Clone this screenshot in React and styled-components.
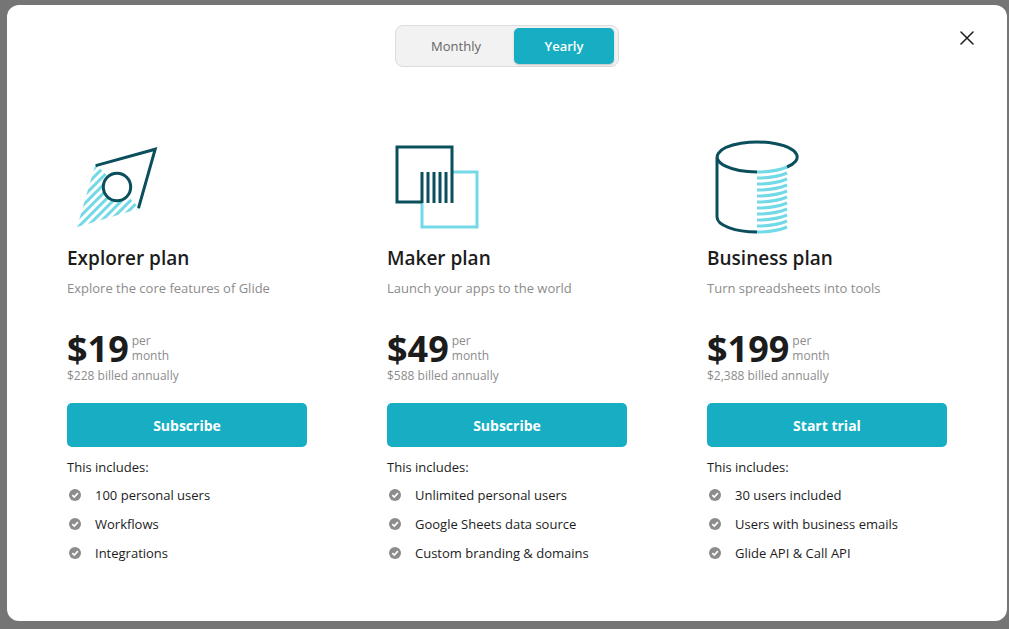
import React, { useState } from "react";
import styled, { createGlobalStyle } from "styled-components";

const GlobalStyle = createGlobalStyle`
  *, *::before, *::after { box-sizing: border-box; }
  body {
    margin: 0;
    background: #757575;
    color: #1c1c1c;
    font-family: "Segoe UI", "Open Sans", "Noto Sans", sans-serif;
    font-size: 13px;
    line-height: 20px;
  }
  button { font-family: inherit; cursor: pointer; }
`;

const Overlay = styled.div`
  display: flex;
  min-height: 100vh;
  padding: 5px 2px 8px 7px;
`;

const Dialog = styled.main`
  flex: 1;
  padding: 20px 60px 40px;
  border-radius: 12px;
  background: #fff;
`;

const Header = styled.header`
  display: grid;
  grid-template-columns: 1fr 224px 1fr;
  align-items: start;
  margin-bottom: 70px;
`;

const PeriodSwitch = styled.div`
  display: flex;
  grid-column: 2;
  height: 42px;
  padding: 2px 4px 2px 2px;
  border: 1px solid #dcdcdc;
  border-radius: 8px;
  background: #f2f2f2;
`;

const PeriodButton = styled.button`
  flex: ${({ $active }) => ($active ? "0 0 100px" : "1")};
  padding: 0;
  border: 0;
  border-radius: 5px;
  background: ${({ $active }) => ($active ? "#17aec3" : "transparent")};
  box-shadow: ${({ $active }) => ($active ? "0 1px 2px rgba(0, 0, 0, 0.2)" : "none")};
  color: ${({ $active }) => ($active ? "#fff" : "#666")};
  font-size: 13px;
  font-weight: ${({ $active }) => ($active ? 600 : 400)};
`;

const CloseButton = styled.button`
  display: flex;
  justify-self: end;
  margin: 0 -33px;
  padding: 6px;
  border: 0;
  background: none;
  color: #1c1c1c;
`;

const Plans = styled.div`
  display: grid;
  grid-template-columns: repeat(3, 1fr);
  gap: 80px;
`;

const Plan = styled.section`
  display: flex;
  flex-direction: column;
`;

const Artwork = styled.svg`
  width: 100px;
  height: 100px;
  fill: none;
  stroke-width: 3;
`;

const PlanName = styled.h2`
  margin: 7px 0 6px;
  font-size: 19px;
  font-weight: 600;
  line-height: 28px;
`;

const Tagline = styled.p`
  margin: 0 0 32px;
  color: #8c8c8c;
`;

const PriceRow = styled.div`
  display: flex;
  align-items: flex-start;
  gap: 3px;
`;

const Amount = styled.strong`
  font-size: 36px;
  font-weight: 700;
  line-height: 38px;
`;

const Per = styled.span`
  width: min-content;
  margin-top: 3px;
  color: #8c8c8c;
  font-size: 12px;
  line-height: 15px;
`;

const Billed = styled.p`
  margin: 0 0 19px;
  color: #8c8c8c;
  font-size: 12px;
  line-height: 16px;
`;

const ActionButton = styled.button`
  height: 44px;
  border: 0;
  border-radius: 5px;
  background: #17aec3;
  color: #fff;
  font-size: 14px;
  font-weight: 700;
`;

const Includes = styled.p`
  margin: 10px 0 3px;
`;

const Features = styled.ul`
  margin: 0;
  padding: 0;
  list-style: none;
`;

const Feature = styled.li`
  display: flex;
  align-items: center;
  gap: 14px;
  height: 29px;
  padding-left: 2px;
`;

const DARK = "#0b4f5c";
const LIGHT = "#74d9e6";

function ExplorerArt() {
  const stripes = Array.from({ length: 11 }, (_, i) => 58.4 + i * 8.58);
  return (
    <Artwork viewBox="0 0 100 100" aria-hidden="true">
      <clipPath id="kite-tail">
        <path d="M28.500 27 73 71.500 10 90Z" />
      </clipPath>
      <g clipPath="url(#kite-tail)" stroke={LIGHT}>
        {stripes.map((s) => (
          <path key={s} d={`M0 ${s}L${s} 0`} />
        ))}
      </g>
      <circle cx="50" cy="50" r="13.7" fill="#fff" stroke={DARK} />
      <path d="M28.700 28.600 88.200 12.200 71.500 71.200" stroke={DARK} />
    </Artwork>
  );
}

function MakerArt() {
  return (
    <Artwork viewBox="0 0 100 100" aria-hidden="true">
      <path d="M65 35H90V90H35V66" stroke={LIGHT} />
      <path d="M35 65H10V10H65V66" stroke={DARK} />
      <path d="M35 35V66M41 35V66M47 35V66M53 35V66M59 35V66" stroke={DARK} />
    </Artwork>
  );
}

function BusinessArt() {
  const layers = Array.from({ length: 11 }, (_, i) => 35 + i * 6);
  return (
    <Artwork viewBox="0 0 100 100" aria-hidden="true">
      <g stroke={LIGHT}>
        {layers.map((y) => (
          <path key={y} d={`M50 ${y}A40 15 0 0 0 80 ${y - 5}`} />
        ))}
      </g>
      <path d="M50 35A40 15 0 1 1 80 30M10 20V80C10 88.300 28 95 50 95" stroke={DARK} />
    </Artwork>
  );
}

function CheckBadge() {
  return (
    <svg width="12" height="12" viewBox="0 0 12 12" fill="none" aria-hidden="true">
      <circle cx="6" cy="6" r="6" fill="#8c8c8c" />
      <path d="M3.300 6.200 5.300 8.100 8.900 4.200" stroke="#fff" strokeWidth="1.700" />
    </svg>
  );
}

const PLANS = [
  {
    name: "Explorer plan",
    tagline: "Explore the core features of Glide",
    price: "$19",
    billed: "$228 billed annually",
    action: "Subscribe",
    features: ["100 personal users", "Workflows", "Integrations"],
    Art: ExplorerArt,
  },
  {
    name: "Maker plan",
    tagline: "Launch your apps to the world",
    price: "$49",
    billed: "$588 billed annually",
    action: "Subscribe",
    features: ["Unlimited personal users", "Google Sheets data source", "Custom branding & domains"],
    Art: MakerArt,
  },
  {
    name: "Business plan",
    tagline: "Turn spreadsheets into tools",
    price: "$199",
    billed: "$2,388 billed annually",
    action: "Start trial",
    features: ["30 users included", "Users with business emails", "Glide API & Call API"],
    Art: BusinessArt,
  },
];

export default function App() {
  const [period, setPeriod] = useState("Yearly");
  return (
    <>
      <GlobalStyle />
      <Overlay>
        <Dialog>
          <Header>
            <PeriodSwitch role="group" aria-label="Billing period">
              {["Monthly", "Yearly"].map((p) => (
                <PeriodButton
                  key={p}
                  type="button"
                  $active={p === period}
                  aria-pressed={p === period}
                  onClick={() => setPeriod(p)}
                >
                  {p}
                </PeriodButton>
              ))}
            </PeriodSwitch>
            <CloseButton type="button" aria-label="Close">
              <svg width="14" height="14" viewBox="0 0 14 14" fill="none" aria-hidden="true">
                <path d="M1 1 13 13M13 1 1 13" stroke="currentColor" strokeWidth="1.500" strokeLinecap="round" />
              </svg>
            </CloseButton>
          </Header>
          <Plans>
            {PLANS.map(({ name, tagline, price, billed, action, features, Art }) => (
              <Plan key={name}>
                <Art />
                <PlanName>{name}</PlanName>
                <Tagline>{tagline}</Tagline>
                <PriceRow>
                  <Amount>{price}</Amount>
                  <Per>per month</Per>
                </PriceRow>
                <Billed>{billed}</Billed>
                <ActionButton type="button">{action}</ActionButton>
                <Includes>This includes:</Includes>
                <Features>
                  {features.map((f) => (
                    <Feature key={f}>
                      <CheckBadge />
                      {f}
                    </Feature>
                  ))}
                </Features>
              </Plan>
            ))}
          </Plans>
        </Dialog>
      </Overlay>
    </>
  );
}
